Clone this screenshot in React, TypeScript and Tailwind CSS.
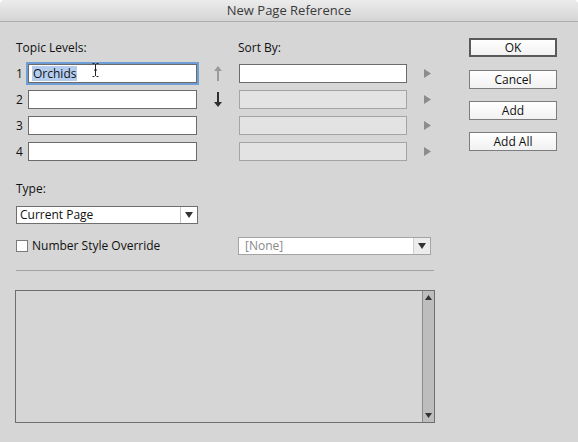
import React from "react";

const font = { fontFamily: '"Open Sans", "Liberation Sans", sans-serif' };

function Triangle({ className = "" }: { className?: string }) {
  return (
    <svg width="7" height="9" viewBox="0 0 7 9" className={className}>
      <path d="M0 0 L7 4.5 L0 9 Z" fill="#8c8c8c" />
    </svg>
  );
}

function Arrow({ up, color }: { up?: boolean; color: string }) {
  return (
    <svg width="8" height="15" viewBox="0 0 8 15">
      {up ? (
        <path d="M4 0 L8 5 L5 5 L5 15 L3 15 L3 5 L0 5 Z" fill={color} />
      ) : (
        <path d="M4 15 L8 10 L5 10 L5 0 L3 0 L3 10 L0 10 Z" fill={color} />
      )}
    </svg>
  );
}

function Caret() {
  return (
    <svg width="8" height="6" viewBox="0 0 8 6">
      <path d="M0 0 L8 0 L4 6 Z" fill="#333" />
    </svg>
  );
}

function MacButton({ label, primary }: { label: string; primary?: boolean }) {
  return (
    <button
      className={`w-[88px] h-[19px] flex items-center justify-center text-[12px] text-[#111] bg-gradient-to-b from-white to-[#f1f1f1] ${
        primary ? "border-2 border-[#5a5a5a]" : "border border-[#7d7d7d]"
      }`}
    >
      {label}
    </button>
  );
}

function LevelRow({ n, first }: { n: number; first?: boolean }) {
  return (
    <div className="flex items-center h-[19px]">
      <span className="w-[12px] text-[12px] text-[#111] leading-none pt-[1px]">{n}</span>
      {first ? (
        <div className="relative w-[169px] h-[19px] bg-white border border-[#6b6b6b] shadow-[0_0_0_2px_#6f9ed6] flex items-center pl-[3px]">
          <span className="bg-[#b4cdee] text-[12px] text-[#111] leading-[15px] px-[1px]">Orchids</span>
          <svg width="7" height="14" viewBox="0 0 7 14" className="absolute left-[63px] top-[-2px]">
            <path d="M0.5 0.5 H2.5 M4.5 0.5 H6.5 M3.5 1 V13 M0.5 13.5 H2.5 M4.5 13.5 H6.5 M2 7 H5" stroke="#222" strokeWidth="1" fill="none" />
          </svg>
        </div>
      ) : (
        <div className="w-[169px] h-[19px] bg-white border border-[#6b6b6b]" />
      )}
      <div className="w-[42px] flex justify-center">
        {n === 1 && <Arrow up color="#9a9a9a" />}
        {n === 2 && <Arrow color="#2e2e2e" />}
      </div>
      {first ? (
        <div className="w-[168px] h-[19px] bg-white border border-[#6b6b6b]" />
      ) : (
        <div className="w-[168px] h-[19px] bg-[#e3e3e3] border border-[#a4a4a4]" />
      )}
      <Triangle className="ml-[17px]" />
    </div>
  );
}

export default function App() {
  return (
    <div className="w-[578px] h-[442px] bg-[#d6d6d6] flex flex-col overflow-hidden rounded-t-[5px]" style={font}>
      {/* Title bar */}
      <div className="h-[22px] shrink-0 bg-gradient-to-b from-[#ececec] to-[#d5d5d5] border-b border-[#aeaeae] flex items-center justify-center text-[13px] text-[#3a3a3a]">
        New Page Reference
      </div>

      <div className="flex">
        {/* Left side */}
        <div className="w-[453px] pl-[16px] pt-[18px] flex flex-col">
          <div className="flex h-[16px] items-center text-[12px] text-[#111]">
            <span className="w-[222px]">Topic Levels:</span>
            <span>Sort By:</span>
          </div>

          <div className="mt-[8px] flex flex-col gap-[7px]">
            <LevelRow n={1} first />
            <LevelRow n={2} />
            <LevelRow n={3} />
            <LevelRow n={4} />
          </div>

          <div className="mt-[20px] h-[16px] flex items-center text-[12px] text-[#111]">Type:</div>
          <div className="mt-[9px] w-[182px] h-[18px] bg-white border border-[#6f6f6f] flex items-center">
            <span className="flex-1 pl-[3px] text-[12px] text-[#111] leading-none">Current Page</span>
            <div className="w-[17px] h-full border-l border-[#c4c4c4] flex items-center justify-center">
              <Caret />
            </div>
          </div>

          <div className="mt-[13px] h-[18px] flex items-center">
            <div className="w-[12px] h-[12px] bg-white border border-[#7a7a7a]" />
            <span className="ml-[4px] w-[204px] text-[12px] text-[#111]">Number Style Override</span>
            <div className="ml-[2px] w-[193px] h-[18px] bg-white border border-[#a4a4a4] flex items-center">
              <span className="flex-1 pl-[6px] text-[12px] text-[#8a8a8a] leading-none">[None]</span>
              <div className="w-[17px] h-full bg-[#ececec] border-l border-[#d0d0d0] flex items-center justify-center">
                <Caret />
              </div>
            </div>
          </div>

          <div className="mt-[15px] w-[418px] h-px bg-[#a3a3a3]" />

          <div className="mt-[19px] -ml-px w-[420px] h-[133px] border border-[#6e6e6e] flex">
            <div className="flex-1 bg-[#d6d6d6]" />
            <div className="w-[12px] bg-[#bdbdbd] border-l border-[#8a8a8a] flex flex-col items-center justify-between py-[4px]">
              <svg width="7" height="5" viewBox="0 0 7 5">
                <path d="M0 5 L7 5 L3.5 0 Z" fill="#333" />
              </svg>
              <svg width="7" height="5" viewBox="0 0 7 5">
                <path d="M0 0 L7 0 L3.5 5 Z" fill="#333" />
              </svg>
            </div>
          </div>
        </div>

        {/* Buttons */}
        <div className="ml-[16px] pt-[16px] flex flex-col gap-[12px]">
          <MacButton label="OK" primary />
          <div className="mt-px">
            <MacButton label="Cancel" />
          </div>
          <MacButton label="Add" />
          <MacButton label="Add All" />
        </div>
      </div>
    </div>
  );
}
